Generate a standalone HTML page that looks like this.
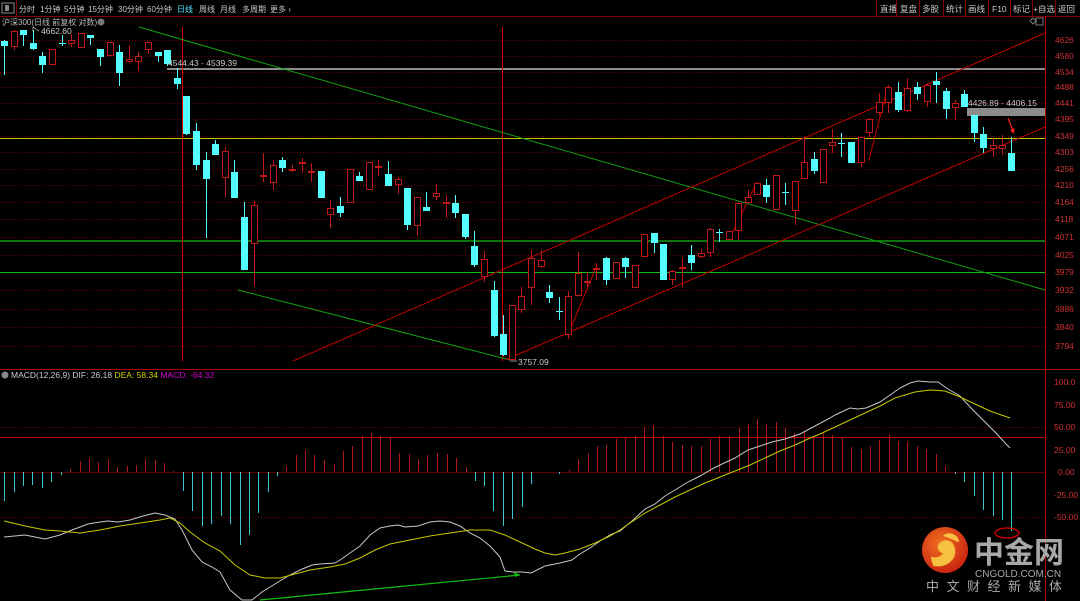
<!DOCTYPE html>
<html><head><meta charset="utf-8"><style>
html,body{margin:0;padding:0;background:#000;width:1080px;height:601px;overflow:hidden}
svg{display:block}
text{font-family:"Liberation Sans","Noto Sans CJK SC",sans-serif}
</style></head><body>
<svg id="s" width="1080" height="601" xmlns="http://www.w3.org/2000/svg">
<rect width="1080" height="601" fill="#000"/>
<line x1="0" y1="16.5" x2="1080" y2="16.5" stroke="#8a0000"/>
<rect x="2" y="3" width="12" height="10" fill="none" stroke="#888" stroke-width="1"/>
<rect x="5" y="5" width="4" height="6" fill="#888"/>
<line x1="16.5" y1="0" x2="16.5" y2="16" stroke="#8a0000"/>
<g font-size="8" fill="#c8c8c8">
<text x="19" y="12">分时</text><text x="40" y="12">1分钟</text><text x="64" y="12">5分钟</text><text x="88" y="12">15分钟</text><text x="118" y="12">30分钟</text><text x="147" y="12">60分钟</text>
<text x="177" y="12" fill="#4fe8ff">日线</text><text x="199" y="12">周线</text><text x="220" y="12">月线</text><text x="242" y="12">多周期</text><text x="270" y="12">更多 ›</text>
</g>
<g font-size="8.5" fill="#c8c8c8">
<line x1="876.5" y1="0" x2="876.5" y2="16" stroke="#8a0000"/><text x="880" y="12">直播</text>
<line x1="896.5" y1="0" x2="896.5" y2="16" stroke="#8a0000"/><text x="900" y="12">复盘</text>
<line x1="919.5" y1="0" x2="919.5" y2="16" stroke="#8a0000"/><text x="922" y="12">多股</text>
<line x1="943.5" y1="0" x2="943.5" y2="16" stroke="#8a0000"/><text x="946" y="12">统计</text>
<line x1="965.5" y1="0" x2="965.5" y2="16" stroke="#8a0000"/><text x="968" y="12">画线</text>
<line x1="988.5" y1="0" x2="988.5" y2="16" stroke="#8a0000"/><text x="992" y="12">F10</text>
<line x1="1010.5" y1="0" x2="1010.5" y2="16" stroke="#8a0000"/><text x="1013" y="12">标记</text>
<line x1="1032.5" y1="0" x2="1032.5" y2="16" stroke="#8a0000"/><text x="1033" y="12">+自选</text>
<line x1="1055.5" y1="0" x2="1055.5" y2="16" stroke="#8a0000"/><text x="1058" y="12">返回</text>
</g>
<text x="2" y="25" font-size="8" fill="#bbb">沪深300(日线 前复权 对数)</text>
<circle cx="101" cy="22" r="3.5" fill="#777"/>
<path d="M1030 21 l3 -3 l3 3 l-3 3z" fill="none" stroke="#999" stroke-width="0.8"/>
<rect x="1036" y="18" width="7" height="7" fill="none" stroke="#999" stroke-width="0.8"/>
<g id="grid"></g>
<line x1="1045.5" y1="17" x2="1045.5" y2="601" stroke="#b00000"/>
<line x1="0" y1="369.5" x2="1080" y2="369.5" stroke="#b00000"/>
<line x1="0" y1="437.5" x2="1045" y2="437.5" stroke="#c00000"/>
<line x1="167" y1="69" x2="1045" y2="69" stroke="#8c8c8c" stroke-width="2"/>
<line x1="0" y1="138.5" x2="1045" y2="138.5" stroke="#c8c800"/>
<line x1="0" y1="241" x2="1045" y2="241" stroke="#129a12" stroke-width="1.5"/>
<line x1="0" y1="272.5" x2="1045" y2="272.5" stroke="#12c012"/>
<rect x="967" y="108" width="78" height="8" fill="#8c8c8c"/>
<line x1="182.5" y1="27" x2="182.5" y2="361" stroke="#d00000"/>
<line x1="502.5" y1="27" x2="502.5" y2="361" stroke="#d00000"/>
<line x1="139" y1="27" x2="1045" y2="290" stroke="#10a010"/>
<line x1="238" y1="290" x2="510" y2="360" stroke="#10a010"/>
<line x1="293" y1="361" x2="1045" y2="33" stroke="#c00000"/>
<line x1="505" y1="360" x2="1045" y2="127" stroke="#c00000"/>
<line x1="568" y1="335" x2="597" y2="265" stroke="#c00000"/>
<line x1="729" y1="240" x2="757" y2="182" stroke="#c00000"/>
<line x1="869" y1="160" x2="888" y2="86" stroke="#c00000"/>
<g id="cd"></g>
<path d="M1008 118 L1013 131" stroke="#ff2020" stroke-width="1.2"/><path d="M1010 130 l4 4 l0.5 -6z" fill="#ff2020"/>
<g font-size="8.5" fill="#c8c8c8">
<text x="41" y="34">4662.60</text><path d="M33 27 v4 M33 27 l6 4" stroke="#ccc" stroke-width="0.7"/>
<text x="168" y="66">4544.43 - 4539.39</text>
<text x="968" y="106">4426.89 - 4406.15</text>
<text x="518" y="365">3757.09</text><path d="M510 361 h7" stroke="#ccc" stroke-width="0.7"/>
</g>
<g id="ax" font-size="8.5" fill="#d03030"></g>
<circle cx="5" cy="375" r="3.5" fill="#888"/>
<text x="11" y="378" font-size="8.5" fill="#ccc">MACD(12,26,9) DIF: 26.18 <tspan fill="#d0d000">DEA: 58.34</tspan> <tspan fill="#d000d0">MACD: -64.32</tspan></text>
<g id="mh"></g>
<polyline id="dif" fill="none" stroke="#c8c8c8" stroke-width="1"/>
<polyline id="dea" fill="none" stroke="#c8c800" stroke-width="1"/>
<line x1="260" y1="600" x2="520" y2="575" stroke="#10c010" stroke-width="1.2"/>
<path d="M520 575 l-6 -3 l1 5z" fill="#10c010"/>
<ellipse cx="1007" cy="533" rx="12" ry="5" fill="none" stroke="#e00000" stroke-width="1.3"/>
<defs><radialGradient id="lg" cx="0.4" cy="0.35" r="0.7"><stop offset="0" stop-color="#f07020"/><stop offset="1" stop-color="#c82010"/></radialGradient></defs>
<circle cx="945" cy="550" r="23" fill="url(#lg)"/>
<path d="M934 565 c12 2 22 -6 20 -16 c-1 -8 -10 -10 -14 -5 c-3 4 0 9 5 8 c-2 5 -8 7 -13 6z M944 536 c6 -4 14 0 14 6" fill="#f8c040" stroke="#f8c040" stroke-width="2"/>
<text x="974" y="563" font-size="30" font-weight="bold" fill="#a8a8a8" font-family="'Noto Sans CJK SC',sans-serif">中金网</text>
<text x="975" y="577" font-size="10" fill="#a8a8a8">CNGOLD.COM.CN</text>
<text x="926" y="591" font-size="13" fill="#a8a8a8" letter-spacing="7.5">中文财经新媒体</text>
</svg>
<script>
const NS="http://www.w3.org/2000/svg";
function el(p,t,a){const e=document.createElementNS(NS,t);for(const k in a)e.setAttribute(k,a[k]);document.getElementById(p).appendChild(e);return e;}
const lab=[[4626,40],[4580,56],[4534,72],[4488,87],[4441,103],[4395,119],[4349,136],[4303,152],[4256,169],[4210,185],[4164,202],[4118,219],[4071,237],[4025,255],[3979,272],[3932,290],[3886,309],[3840,327],[3794,346]];
lab.forEach(([v,y])=>{el('grid','line',{x1:0,y1:y+.5,x2:1045,y2:y+.5,stroke:'#7a0000','stroke-dasharray':'1,2'});const t=el('ax','text',{x:1055,y:y+3});t.textContent=v;});
[[100,'100.0',382],[75,'75.00',405],[50,'50.00',427],[25,'25.00',450],[0,'0.00',472],[-25,'-25.00',495],[-50,'-50.00',517]].forEach(([v,s,y])=>{if(v==50||v==-50)el('grid','line',{x1:0,y1:y+.5,x2:1045,y2:y+.5,stroke:'#7a0000','stroke-dasharray':'1,2'});const t=el('ax','text',{x:s.length==5&&v<0?1050:(v==0?1058:1054),y:y+3});t.textContent=s;});
el('grid','line',{x1:0,y1:472.5,x2:1045,y2:472.5,stroke:'#600000'});
const A=[['c',41,46,40,75],['r',31,47,30,50],['c',30,35,30,46],['c',43,49,30,50],['c',56,65,52,73],['r',49,65,49,65],['c',43,44,35,46],['r',40,44,34,47],['r',33,48,33,48],['c',35,38,35,45],['c',49,57,49,66],['r',42,56,42,56],['c',52,73,45,86],['r',59,62,45,63],['r',56,62,52,71],['r',42,50,42,54],['c',52,56,52,62],['c',50,64,50,66],['c',78,84,68,89],['c',96,134,96,135],['c',131,165,123,170],['c',160,179,152,238],['c',144,155,140,155],['r',151,178,147,197],['c',172,198,160,198],['c',217,270,202,270],['r',205,244,201,286],['r',175,176,153,182],['r',165,183,160,190],['c',160,168,157,172],['r',169,170,165,172],['r',162,163,158,173],['r',171,172,163,182],['c',171,198,171,198],['r',208,215,200,228],['c',206,213,197,217],['r',169,203,169,203],['c',176,181,172,181],['r',162,190,162,190],['r',166,167,160,176],['c',174,186,161,186],['r',179,185,177,194],['c',188,225,188,230],['r',197,226,197,236],['c',207,211,192,211],['r',193,197,184,200],['r',202,204,195,218],['c',203,213,195,218],['c',214,237,214,239],['c',246,265,231,267],['r',259,277,251,282],['c',290,336,281,337],['c',334,355,315,356]];
const C=[];A.forEach((d,i)=>C.push([4+i*9.6,...d]));
const B=[[512,'r',305,360,305,360],[521,'r',296,310,287,313],[531,'r',258,288,250,305],[541,'r',260,267,250,268],[549,'c',292,298,285,303],[559,'c',311,312,297,320],[568,'r',296,335,291,339],[578,'r',273,296,252,296],[587,'r',281,283,272,287],[596,'r',268,269,263,280],[606,'c',258,280,257,285],[616,'r',262,279,262,279],[625,'c',258,267,257,278],[635,'r',265,288,265,288],[644,'r',234,257,234,257],[654,'c',233,243,233,253],[663,'c',244,280,244,280],[672,'r',271,280,270,285],[682,'r',267,269,258,287],[691,'c',255,263,245,270],[701,'r',253,257,249,258],[710,'r',229,253,228,257],[719,'c',232,233,229,242],[729,'r',231,240,231,240],[738,'r',203,231,202,240],[748,'r',197,203,190,203],[757,'r',183,195,183,195],[766,'c',185,197,179,203],[776,'r',175,210,175,210],[785,'c',192,193,183,205],[795,'r',181,211,181,225],[804,'r',162,179,137,179],[814,'c',159,171,152,174],[823,'r',149,183,149,183],[832,'r',142,146,129,153],[841,'c',143,144,133,157],[851,'c',142,163,142,163],[861,'r',137,163,137,167],[869,'r',119,133,118,137],[879,'r',102,113,93,115],[888,'r',87,103,85,113],[898,'c',92,110,82,112],[907,'r',88,111,78,112],[917,'c',87,94,82,100],[927,'r',85,102,83,107],[936,'c',81,85,72,103],[946,'c',91,109,88,119],[955,'r',103,108,100,120],[964,'c',94,107,90,107],[974,'c',115,133,115,142],[983,'c',134,148,127,153],[993,'r',145,149,138,157],[1002,'r',145,149,135,155],[1011,'c',153,171,137,171]];
B.forEach(b=>C.push(b));
C.forEach(([x,t,o,c,h,l])=>{const col=t=='c'?'#54ffff':'#c01818';x=Math.round(x)+.5;
el('cd','line',{x1:x,y1:h,x2:x,y2:l,stroke:col});
if(t=='c')el('cd','rect',{x:x-3.5,y:o,width:7,height:Math.max(1,c-o),fill:col});
else el('cd','rect',{x:x-3,y:o+.5,width:6,height:Math.max(1,c-o-1),fill:'#000',stroke:col});});
const H=[[4,-29],[14,-20],[23,-14],[32,-13],[42,-16],[51,-10],[61,-3],[70,3],[80,11],[89,14],[98,10],[108,13],[117,5],[127,6],[136,7],[145,13],[155,12],[164,9],[173,1],[183,-19],[192,-39],[202,-54],[211,-52],[221,-44],[230,-52],[240,-73],[249,-63],[258,-41],[268,-20],[277,-4],[286,6],[296,17],[305,22],[314,17],[324,12],[334,8],[343,21],[352,26],[362,36],[371,39],[380,36],[390,35],[399,19],[409,18],[418,13],[427,17],[437,19],[447,18],[456,14],[466,5],[475,-9],[484,-14],[493,-39],[503,-54],[512,-47],[522,-35],[531,-12],[541,0],[559,-2],[569,2],[578,13],[588,19],[597,26],[606,27],[616,33],[625,34],[635,36],[644,45],[653,47],[663,36],[672,30],[682,27],[691,26],[701,26],[710,33],[719,36],[729,36],[739,44],[748,48],[757,53],[766,48],[776,50],[785,44],[794,39],[804,41],[813,36],[823,39],[832,37],[842,35],[851,25],[861,23],[870,26],[879,32],[889,38],[898,31],[907,30],[917,26],[926,23],[936,18],[945,6],[955,-2],[964,-10],[974,-24],[983,-38],[993,-44],[1002,-48],[1011,-59]];
H.forEach(([x,v])=>{if(!v)return;x+=.5;el('mh','line',{x1:x,y1:472,x2:x,y2:472-v,stroke:v>0?'#b01818':'#3cc8d0'});});
document.getElementById('dif').setAttribute('points',"4,537 25,535 45,539 60,535 72,530 88,524 100,522 108,521 118,522 130,520 143,516 155,513 165,515 175,519 182,530 192,550 202,562 212,567 220,572 230,590 242,600 252,600 262,592 275,584 288,576 300,570 312,565 320,564 335,563 340,560 350,553 360,546 370,535 380,528 390,526 398,525 405,527 418,526 430,522 440,521 450,522 460,526 470,533 480,538 490,546 500,557 505,571 513,572 522,572 531,573 545,566 560,563 572,560 580,554 590,548 600,541 610,535 620,531 632,521 645,509 655,504 665,496 675,490 688,482 700,476 712,469 722,464 735,458 748,450 760,446 772,442 785,439 800,434 815,426 830,418 835,415 850,408 858,409 866,408 880,402 890,395 900,388 910,383 918,381 930,382 938,382 948,389 960,396 972,409 984,421 995,432 1006,444 1010,448");
document.getElementById('dea').setAttribute('points',"4,521 25,526 45,530 60,531 80,533 100,530 120,526 140,523 160,520 170,518 180,523 190,532 205,543 220,551 235,565 250,575 265,578 280,578 295,574 310,570 330,567 345,564 360,558 375,550 390,544 410,540 430,536 450,533 470,530 490,530 505,535 520,542 535,549 545,553 555,555 565,553 580,549 595,543 610,536 620,530 630,523 645,513 660,505 675,497 690,490 705,483 720,477 735,471 750,465 765,458 780,451 795,445 810,438 820,434 835,427 850,420 865,413 880,406 895,398 915,392 930,390 945,391 960,397 975,404 990,411 1010,418");
</script>
</body></html>
